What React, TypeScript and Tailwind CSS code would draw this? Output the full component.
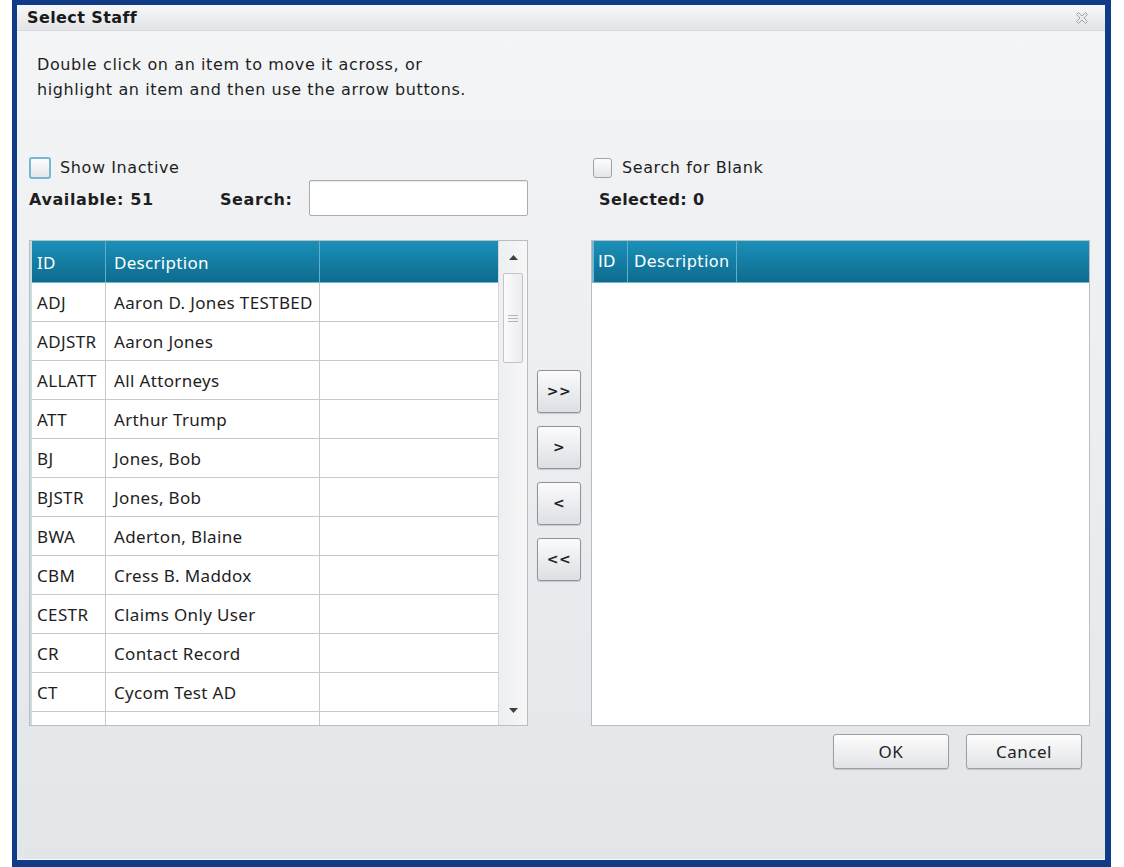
import React from "react";

const rows: [string, string][] = [
  ["ADJ", "Aaron D. Jones TESTBED"],
  ["ADJSTR", "Aaron Jones"],
  ["ALLATT", "All Attorneys"],
  ["ATT", "Arthur Trump"],
  ["BJ", "Jones, Bob"],
  ["BJSTR", "Jones, Bob"],
  ["BWA", "Aderton, Blaine"],
  ["CBM", "Cress B. Maddox"],
  ["CESTR", "Claims Only User"],
  ["CR", "Contact Record"],
  ["CT", "Cycom Test AD"],
  ["", ""],
];

const verdana = "font-['DejaVu_Sans',Verdana,sans-serif]";
const segoe = "font-['Noto_Sans','Open_Sans',sans-serif]";

const CloseIcon = () => (
  <svg width="14" height="14" viewBox="0 0 14 14">
    <path
      d="M1.5 3.5 L3.5 1.5 L7 5 L10.5 1.5 L12.5 3.5 L9 7 L12.5 10.5 L10.5 12.5 L7 9 L3.5 12.5 L1.5 10.5 L5 7 Z"
      fill="#ececec"
      stroke="#a3a3a3"
      strokeWidth="1"
      strokeLinejoin="round"
    />
  </svg>
);

const MoveButton = ({ label }: { label: string }) => (
  <button className={`w-[44px] h-[43px] rounded-[3px] border border-[#8f9398] bg-gradient-to-b from-[#fbfbfc] to-[#dcdfe3] shadow-[0_1px_1px_rgba(0,0,0,0.15)] text-[14px] font-bold tracking-[0.5px] text-[#222] ${verdana}`}>
    {label}
  </button>
);

const DialogButton = ({ label }: { label: string }) => (
  <button className={`w-[116px] h-[35px] rounded-[3px] border border-[#9a9ea3] bg-gradient-to-b from-[#fdfdfd] to-[#e1e3e6] shadow-[0_1px_1px_rgba(0,0,0,0.15)] text-[17px] tracking-[0.5px] text-[#222] ${segoe}`}>
    {label}
  </button>
);

export default function App() {
  return (
    <div className="w-[1124px] h-[867px] bg-white flex">
      <div className="ml-[12px] w-[1099px] h-[867px] bg-[#0f3b87] pt-[5px] pl-[5px] pr-[6px] pb-[7px]">
        <div className="w-full h-full flex flex-col bg-gradient-to-b from-[#f4f5f7] to-[#e3e6e9]">
          {/* Title bar */}
          <div className="h-[26px] flex items-center justify-between pl-[10px] pr-[16px] bg-gradient-to-b from-[#f7f8f9] to-[#e2e4e7] border-b border-[#d6d9dd]">
            <span className={`pt-px text-[16px] font-bold tracking-[0.4px] text-[#1a1a1a] ${verdana}`}>Select Staff</span>
            <CloseIcon />
          </div>

          {/* Body */}
          <div className={`flex-1 flex flex-col pl-[12px] pr-[15px] text-[#1e1e1e] ${verdana}`}>
            <p className="mt-[21px] ml-[8px] text-[16px] tracking-[0.6px] leading-[25px]">
              Double click on an item to move it across, or
              <br />
              highlight an item and then use the arrow buttons.
            </p>

            {/* Controls */}
            <div className="mt-[53px] flex text-[16px] tracking-[0.6px]">
              <div className="w-[499px] flex flex-col">
                <label className="h-[25px] flex items-center gap-[9px]">
                  <span className="w-[22px] h-[22px] rounded-[3px] border-2 border-[#79b6d3] bg-gradient-to-b from-[#fbfcfd] to-[#e3e7eb]" />
                  <span>Show Inactive</span>
                </label>
                <div className="h-[36px] flex items-center">
                  <span className="w-[191px] pt-[4px] font-bold">Available: 51</span>
                  <span className="w-[89px] pt-[4px] font-bold">Search:</span>
                  <input className="w-[219px] h-[36px] bg-white border border-[#a9acb0] rounded-[2px] shadow-[inset_0_1px_1px_rgba(0,0,0,0.08)] outline-none" />
                </div>
              </div>
              <div className="w-[63px]" />
              <div className="w-[499px] flex flex-col">
                <label className="h-[25px] flex items-center gap-[10px] pl-[2px]">
                  <span className="w-[19px] h-[20px] rounded-[3px] border border-[#9ea3a8] bg-gradient-to-b from-[#fbfcfd] to-[#e3e7eb]" />
                  <span>Search for Blank</span>
                </label>
                <div className="h-[36px] flex items-center pl-[8px]">
                  <span className="pt-[4px] font-bold tracking-[0.4px]">Selected: 0</span>
                </div>
              </div>
            </div>

            {/* Lists */}
            <div className="mt-[24px] flex">
              {/* Available list */}
              <div className="w-[499px] h-[486px] border border-[#b9bcc0] bg-white flex overflow-hidden">
                <div className="w-[468px] flex flex-col border-l-2 border-[#c9dce6]">
                  <div className={`h-[42px] shrink-0 flex bg-gradient-to-b from-[#1b91ba] to-[#0e6b8e] border-b border-[#6fb9d4] text-white text-[17px] tracking-[0.3px] ${segoe}`}>
                    <div className="w-[74px] border-r border-[#5fb0cd] flex items-center pl-[5px] pt-[2px]">ID</div>
                    <div className="w-[214px] border-r border-[#5fb0cd] flex items-center pl-[8px] pt-[2px]">Description</div>
                    <div className="flex-1" />
                  </div>
                  {rows.map(([id, desc], i) => (
                    <div key={i} className={`h-[39px] shrink-0 flex border-b border-[#c9c9c9] text-[17px] tracking-[0.35px] text-[#1e1e1e] ${segoe}`}>
                      <div className="w-[74px] border-r border-[#c9c9c9] flex items-center pl-[5px] pt-[2px]">{id}</div>
                      <div className="w-[214px] border-r border-[#c9c9c9] flex items-center pl-[8px] pt-[2px] whitespace-nowrap">{desc}</div>
                      <div className="flex-1" />
                    </div>
                  ))}
                </div>
                {/* Scrollbar */}
                <div className="w-[29px] border-l border-[#d4d6d9] bg-gradient-to-r from-[#eeeff1] to-[#f7f7f8] flex flex-col items-center">
                  <svg width="9" height="5" viewBox="0 0 9 5" className="mt-[14px]">
                    <path d="M0 5 L4.5 0 L9 5 Z" fill="#404040" />
                  </svg>
                  <div className="mt-[13px] w-[20px] h-[90px] rounded-[2px] border border-[#c1c4c8] bg-gradient-to-r from-[#fbfbfc] to-[#ececee] flex flex-col items-center justify-center gap-[2px]">
                    <div className="w-[10px] h-px bg-[#b3b6ba]" />
                    <div className="w-[10px] h-px bg-[#b3b6ba]" />
                    <div className="w-[10px] h-px bg-[#b3b6ba]" />
                  </div>
                  <div className="flex-1" />
                  <svg width="9" height="5" viewBox="0 0 9 5" className="mb-[12px]">
                    <path d="M0 0 L9 0 L4.5 5 Z" fill="#404040" />
                  </svg>
                </div>
              </div>

              {/* Move buttons */}
              <div className="ml-[9px] mr-[10px] pt-[130px] flex flex-col gap-[13px]">
                <MoveButton label=">>" />
                <MoveButton label=">" />
                <MoveButton label="<" />
                <MoveButton label="<<" />
              </div>

              {/* Selected list */}
              <div className="w-[499px] flex flex-col">
                <div className="h-[486px] border border-[#b9bcc0] bg-white flex flex-col">
                  <div className={`h-[42px] flex border-l-2 border-b border-[#6fb9d4] bg-gradient-to-b from-[#1b91ba] to-[#0e6b8e] text-white text-[16px] tracking-[0.4px] ${verdana}`}>
                    <div className="w-[34px] border-r border-[#5fb0cd] flex items-center pl-[4px]">ID</div>
                    <div className="w-[109px] border-r border-[#5fb0cd] flex items-center pl-[6px]">Description</div>
                    <div className="flex-1" />
                  </div>
                </div>
                <div className="mt-[8px] pr-[8px] flex justify-end gap-[17px]">
                  <DialogButton label="OK" />
                  <DialogButton label="Cancel" />
                </div>
              </div>
            </div>
          </div>
          <div className="h-px bg-[#f7f8f9]" />
        </div>
      </div>
    </div>
  );
}
